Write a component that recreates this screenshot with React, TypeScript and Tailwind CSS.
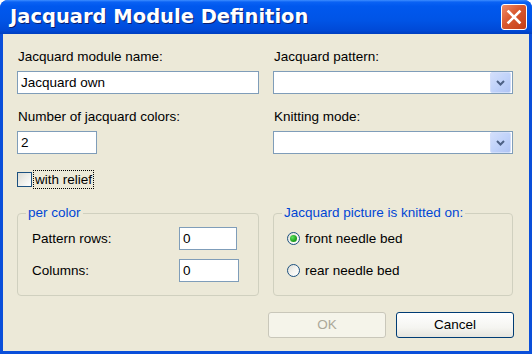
import { useState } from "react";

const ui = "font-['Liberation_Sans',Arial,sans-serif] text-[13.5px] leading-[16px] text-black";

const TextBox = ({ value, width }: { value: string; width: string }) => (
  <div className={`${width} flex h-[23px] items-center border border-[#7F9DB9] bg-white pl-[3px]`}>
    <span>{value}</span>
  </div>
);

const ComboBox = () => (
  <div className="flex h-[23px] w-full items-center justify-end border border-[#7F9DB9] bg-white pr-[1px]">
    <div className="flex h-[21px] w-[21px] items-center justify-center rounded-[2px] border border-[#D2DEFB] bg-[linear-gradient(135deg,#D3DFFB_0%,#C1D3FA_50%,#B0C4F4_100%)]">
      <svg width="9" height="6" viewBox="0 0 9 6">
        <path d="M1 1 L4.5 4.5 L8 1" fill="none" stroke="#4D6185" strokeWidth="2" />
      </svg>
    </div>
  </div>
);

const Radio = ({ checked }: { checked: boolean }) => (
  <div className="flex h-[13px] w-[13px] items-center justify-center rounded-full border border-[#1C5180] bg-[linear-gradient(135deg,#DCDBD3_0%,#F4F4F0_50%,#FFFFFF_100%)]">
    {checked && (
      <div className="h-[7px] w-[7px] rounded-full bg-[radial-gradient(circle_at_35%_35%,#5CE35C_0%,#21A121_60%,#178A17_100%)]" />
    )}
  </div>
);

const Legend = ({ text }: { text: string }) => (
  <legend className="ml-[8px] px-[2px] text-[#0046D5]">{text}</legend>
);

export default function App() {
  const [front, setFront] = useState(true);

  return (
    <div className={`${ui} flex h-[354px] w-[532px] flex-col overflow-hidden rounded-t-[8px] bg-[#0A4FDA]`}>
      {/* Title bar */}
      <div className="flex h-[34px] shrink-0 items-center justify-between bg-[linear-gradient(to_bottom,#3D8DFF_0%,#0A62F4_6%,#0058EE_18%,#0054E6_60%,#0049D6_90%,#003FC0_100%)] pl-[10px] pr-[5px]">
        <span className="font-['DejaVu_Sans',sans-serif] text-[19.5px] font-bold text-white [text-shadow:1px_1px_0_#0A1E6E]">
          Jacquard Module Definition
        </span>
        <div className="flex h-[26px] w-[26px] items-center justify-center rounded-[3px] border border-white bg-[linear-gradient(135deg,#F08C6A_0%,#D9582F_45%,#C33E17_100%)]">
          <svg width="16" height="16" viewBox="0 0 16 16">
            <path d="M2.5 2.5 L13.5 13.5 M13.5 2.5 L2.5 13.5" stroke="white" strokeWidth="2.6" strokeLinecap="square" />
          </svg>
        </div>
      </div>

      {/* Dialog body */}
      <div className="mx-[3px] mb-[3px] flex flex-1 flex-col bg-[#ECE9D8] pl-[14px] pr-[16px] pt-[15px]">
        <div className="flex gap-[14px]">
          <div className="w-[242px]">
            <div className="pl-[1px]">Jacquard module name:</div>
            <div className="mt-[6px]">
              <TextBox value="Jacquard own" width="w-full" />
            </div>
          </div>
          <div className="w-[240px]">
            <div className="pl-[1px]">Jacquard pattern:</div>
            <div className="mt-[6px]">
              <ComboBox />
            </div>
          </div>
        </div>

        <div className="mt-[15px] flex gap-[14px]">
          <div className="w-[242px]">
            <div className="pl-[1px]">Number of jacquard colors:</div>
            <div className="mt-[6px]">
              <TextBox value="2" width="w-[80px]" />
            </div>
          </div>
          <div className="w-[240px]">
            <div className="pl-[1px]">Knitting mode:</div>
            <div className="mt-[6px]">
              <ComboBox />
            </div>
          </div>
        </div>

        {/* with relief */}
        <div className="mt-[16px] flex h-[19px] items-center">
          <div className="h-[15px] w-[15px] border border-[#1C5180] bg-[linear-gradient(135deg,#DCDCD5_0%,#F2F2EE_60%,#FFFFFF_100%)]" />
          <div className="ml-[1px] border border-dotted border-black px-[1px] leading-[17px]">with relief</div>
        </div>

        {/* Group boxes */}
        <div className="mt-[16px] flex gap-[14px]">
          <fieldset className="h-[91px] w-[242px] rounded-[4px] border border-[#D0D0BF]">
            <Legend text="per color" />
            <div className="mt-[6px] flex flex-col gap-[9px] pl-[14px]">
              <div className="flex items-center">
                <span className="w-[147px]">Pattern rows:</span>
                <TextBox value="0" width="w-[58px]" />
              </div>
              <div className="flex items-center">
                <span className="w-[147px]">Columns:</span>
                <TextBox value="0" width="w-[60px]" />
              </div>
            </div>
          </fieldset>

          <fieldset className="h-[91px] w-[240px] rounded-[4px] border border-[#D0D0BF]">
            <Legend text="Jacquard picture is knitted on:" />
            <div className="mt-[6px] flex flex-col gap-[9px] pl-[13px]">
              <div className="flex h-[23px] items-center" onClick={() => setFront(true)}>
                <Radio checked={front} />
                <span className="ml-[5px]">front needle bed</span>
              </div>
              <div className="flex h-[23px] items-center" onClick={() => setFront(false)}>
                <Radio checked={!front} />
                <span className="ml-[5px]">rear needle bed</span>
              </div>
            </div>
          </fieldset>
        </div>

        {/* Buttons */}
        <div className="-mr-[1px] mt-[16px] flex justify-end gap-[10px]">
          <button className="h-[26px] w-[118px] rounded-[3px] border border-[#C9C7BA] bg-[#F5F4EA] text-[#ACA899]">
            OK
          </button>
          <button className="h-[26px] w-[118px] rounded-[3px] border border-[#003C74] bg-[linear-gradient(to_bottom,#FFFFFF_0%,#F5F5F1_60%,#E6E5DE_100%)]">
            Cancel
          </button>
        </div>
      </div>
    </div>
  );
}
